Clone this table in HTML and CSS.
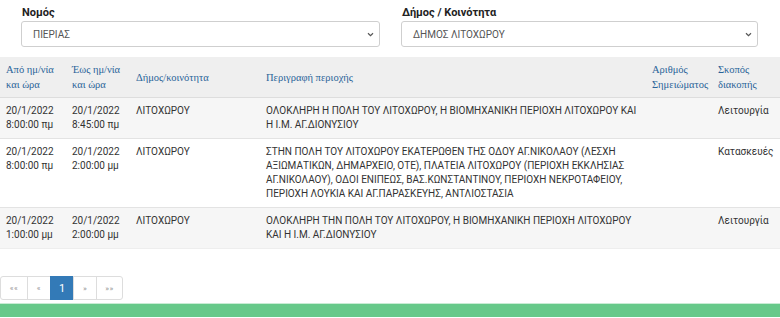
FILE: index.html
```html
<!DOCTYPE html>
<html lang="el">
<head>
<meta charset="utf-8">
<title>Διακοπές</title>
<link rel="stylesheet" href="styles.css">
</head>
<body>
<div class="filters">
  <div class="field">
    <label class="label">Νομός</label>
    <div class="select"><span>ΠΙΕΡΙΑΣ</span><svg class="chev" width="7" height="5" viewBox="0 0 7 5"><path d="M1 1.2 L3.5 3.6 L6 1.2" fill="none" stroke="#555" stroke-width="1.2"/></svg></div>
  </div>
  <div class="field">
    <label class="label">Δήμος / Κοινότητα</label>
    <div class="select"><span>ΔΗΜΟΣ ΛΙΤΟΧΩΡΟΥ</span><svg class="chev" width="7" height="5" viewBox="0 0 7 5"><path d="M1 1.2 L3.5 3.6 L6 1.2" fill="none" stroke="#555" stroke-width="1.2"/></svg></div>
  </div>
</div>

<table class="grid">
  <colgroup>
    <col class="c1"><col class="c2"><col class="c3"><col class="c4"><col class="c5"><col class="c6">
  </colgroup>
  <thead>
    <tr>
      <th>Από ημ/νία και ώρα</th>
      <th>Έως ημ/νία και ώρα</th>
      <th>Δήμος/κοινότητα</th>
      <th>Περιγραφή περιοχής</th>
      <th>Αριθμός Σημειώματος</th>
      <th>Σκοπός διακοπής</th>
    </tr>
  </thead>
  <tbody>
    <tr class="odd">
      <td>20/1/2022 8:00:00 πμ</td>
      <td>20/1/2022 8:45:00 πμ</td>
      <td>ΛΙΤΟΧΩΡΟΥ</td>
      <td>ΟΛΟΚΛΗΡΗ Η ΠΟΛΗ ΤΟΥ ΛΙΤΟΧΩΡΟΥ, Η ΒΙΟΜΗΧΑΝΙΚΗ ΠΕΡΙΟΧΗ ΛΙΤΟΧΩΡΟΥ ΚΑΙ Η Ι.Μ. ΑΓ.ΔΙΟΝΥΣΙΟΥ</td>
      <td></td>
      <td>Λειτουργία</td>
    </tr>
    <tr>
      <td>20/1/2022 8:00:00 πμ</td>
      <td>20/1/2022 2:00:00 μμ</td>
      <td>ΛΙΤΟΧΩΡΟΥ</td>
      <td>ΣΤΗΝ ΠΟΛΗ ΤΟΥ ΛΙΤΟΧΩΡΟΥ ΕΚΑΤΕΡΩΘΕΝ ΤΗΣ ΟΔΟΥ ΑΓ.ΝΙΚΟΛΑΟΥ (ΛΕΣΧΗ ΑΞΙΩΜΑΤΙΚΩΝ, ΔΗΜΑΡΧΕΙΟ, ΟΤΕ), ΠΛΑΤΕΙΑ ΛΙΤΟΧΩΡΟΥ (ΠΕΡΙΟΧΗ ΕΚΚΛΗΣΙΑΣ ΑΓ.ΝΙΚΟΛΑΟΥ), ΟΔΟΙ ΕΝΙΠΕΩΣ, ΒΑΣ.ΚΩΝΣΤΑΝΤΙΝΟΥ, ΠΕΡΙΟΧΗ ΝΕΚΡΟΤΑΦΕΙΟΥ, ΠΕΡΙΟΧΗ ΛΟΥΚΙΑ ΚΑΙ ΑΓ.ΠΑΡΑΣΚΕΥΗΣ, ΑΝΤΛΙΟΣΤΑΣΙΑ</td>
      <td></td>
      <td>Κατασκευές</td>
    </tr>
    <tr class="odd">
      <td>20/1/2022 1:00:00 μμ</td>
      <td>20/1/2022 2:00:00 μμ</td>
      <td>ΛΙΤΟΧΩΡΟΥ</td>
      <td>ΟΛΟΚΛΗΡΗ ΤΗΝ ΠΟΛΗ ΤΟΥ ΛΙΤΟΧΩΡΟΥ, Η ΒΙΟΜΗΧΑΝΙΚΗ ΠΕΡΙΟΧΗ ΛΙΤΟΧΩΡΟΥ ΚΑΙ Η Ι.Μ. ΑΓ.ΔΙΟΝΥΣΙΟΥ</td>
      <td></td>
      <td>Λειτουργία</td>
    </tr>
  </tbody>
</table>

<nav class="pager">
  <a class="pg first">««</a>
  <a class="pg">«</a>
  <a class="pg active">1</a>
  <a class="pg">»</a>
  <a class="pg last">»»</a>
</nav>

<footer class="footbar"></footer>
</body>
</html>
```

FILE: styles.css
```css
* { box-sizing: border-box; }
html, body { margin: 0; padding: 0; background: #fff; }
body {
  font-family: Roboto, "Noto Sans", "DejaVu Sans", sans-serif;
  font-size: 10px;
  color: #333;
  width: 780px;
  height: 318px;
  overflow: hidden;
  display: flex;
  flex-direction: column;
}

.filters {
  display: grid;
  grid-template-columns: 359px 357px;
  column-gap: 21px;
  padding: 6px 22px 0 21px;
}
.field { display: flex; flex-direction: column; }
.label {
  font-weight: 700;
  font-size: 11px;
  line-height: 14px;
  color: #222;
  padding-left: 1px;
  margin-bottom: 1px;
}
.select {
  height: 26px;
  border: 1px solid #cfcfcf;
  border-radius: 3px;
  display: flex;
  align-items: center;
  justify-content: space-between;
  padding: 0 5px 0 11px;
  color: #555;
  font-size: 10px;
  background: #fff;
}
.chev { display: block; margin-top: 1px; }

.grid {
  margin-top: 10px;
  width: 780px;
  border-collapse: collapse;
  table-layout: fixed;
}
.c1 { width: 66px; }
.c2 { width: 64px; }
.c3 { width: 130px; }
.c4 { width: 386px; }
.c5 { width: 66px; }
.c6 { width: 68px; }

.grid th {
  background: #efefef;
  font-family: "Liberation Serif", "DejaVu Serif", serif;
  font-weight: 400;
  font-size: 10.5px;
  line-height: 15px;
  color: #2a6499;
  text-align: left;
  vertical-align: middle;
  padding: 5px 6px 5px 6px;
  border-bottom: 1px solid #ddd;
}
.grid td {
  padding: 6px 6px;
  line-height: 14px;
  vertical-align: top;
  border-top: 1px solid #e3e3e3;
  color: #333;
}
.grid tr.odd td { background: #f6f6f6; }
.grid tbody tr:last-child td { border-bottom: 1px solid #eee; }

.pager {
  display: flex;
  margin-top: 27px;
  height: 24px;
}
.pg {
  display: flex;
  align-items: center;
  justify-content: center;
  height: 24px;
  border: 1px solid #ddd;
  margin-left: -1px;
  color: #999;
  font-size: 8px;
  letter-spacing: 0.5px;
  width: 24px;
}
.pg.first { margin-left: 0; width: 28px; border-radius: 3px 0 0 3px; }
.pg.last { width: 27px; border-radius: 0 3px 3px 0; }
.pg.active {
  background: #337ab7;
  border-color: #337ab7;
  color: #fff;
  font-size: 11px;
  letter-spacing: 0;
}

.footbar {
  margin-top: 3px;
  height: 14px;
  background: #67c98a;
  border-top: 1px solid #c9ecd5;
}
```
